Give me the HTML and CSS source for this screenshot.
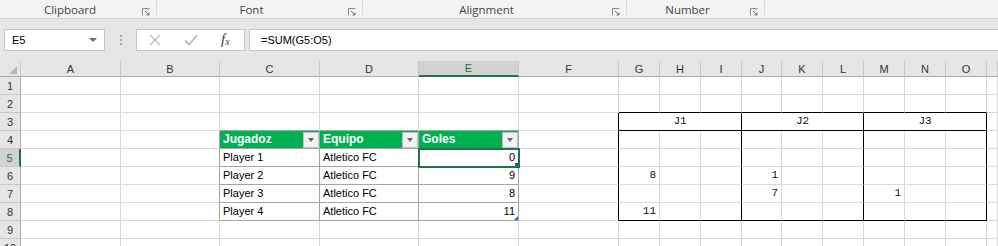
FILE: index.html
```html
<!DOCTYPE html>
<html lang="en">
<head>
    <meta charset="UTF-8">
    <title>Libro1 - Excel</title>
    <link rel="stylesheet" href="styles.css">
</head>
<body>
    <!-- ribbon group labels -->
    <div class="ribbon">
        <div class="group g-clip"><span>Clipboard</span><svg class="launcher" width="8" height="8" viewBox="0 0 8 8"><path d="M0.5 7.5V0.5H7.5" fill="none" stroke="#8a8a8a"/><path d="M3 3L7 7M7 4.5V7H4.5" fill="none" stroke="#6a6a6a"/></svg></div>
        <div class="group g-font"><span>Font</span><svg class="launcher" width="8" height="8" viewBox="0 0 8 8"><path d="M0.5 7.5V0.5H7.5" fill="none" stroke="#8a8a8a"/><path d="M3 3L7 7M7 4.5V7H4.5" fill="none" stroke="#6a6a6a"/></svg></div>
        <div class="group g-align"><span>Alignment</span><svg class="launcher" width="8" height="8" viewBox="0 0 8 8"><path d="M0.5 7.5V0.5H7.5" fill="none" stroke="#8a8a8a"/><path d="M3 3L7 7M7 4.5V7H4.5" fill="none" stroke="#6a6a6a"/></svg></div>
        <div class="group g-num"><span>Number</span><svg class="launcher" width="8" height="8" viewBox="0 0 8 8"><path d="M0.5 7.5V0.5H7.5" fill="none" stroke="#8a8a8a"/><path d="M3 3L7 7M7 4.5V7H4.5" fill="none" stroke="#6a6a6a"/></svg></div>
    </div>

    <!-- name box + formula bar -->
    <div class="formula-row">
        <div class="name-box">
            <span>E5</span>
            <span class="caret"></span>
        </div>
        <div class="grip"><i></i><i></i><i></i></div>
        <div class="fx-box">
            <svg width="12" height="12" viewBox="0 0 12 12"><path d="M1 1L11 11M11 1L1 11" stroke="#b8b8b8" stroke-width="1.3"/></svg>
            <svg width="14" height="12" viewBox="0 0 14 12"><path d="M1 6.5L5 10.5L13 1.5" fill="none" stroke="#b8b8b8" stroke-width="1.8"/></svg>
            <span class="fx"><i>f</i><sub>x</sub></span>
        </div>
        <div class="formula-input">=SUM(G5:O5)</div>
    </div>

    <!-- worksheet grid -->
    <table class="sheet">
        <colgroup>
            <col style="width:21px"><col style="width:100px"><col style="width:99px"><col style="width:100px">
            <col style="width:99px"><col style="width:100px"><col style="width:100px"><col style="width:41px">
            <col style="width:41px"><col style="width:41px"><col style="width:40px"><col style="width:41px">
            <col style="width:41px"><col style="width:41px"><col style="width:41px"><col style="width:41px">
            <col>
        </colgroup>
        <tr class="col-heads">
            <th class="corner"><span></span></th>
            <th>A</th><th>B</th><th>C</th><th>D</th><th class="sel">E</th><th>F</th>
            <th>G</th><th>H</th><th>I</th><th>J</th><th>K</th><th>L</th><th>M</th><th>N</th><th>O</th><th></th>
        </tr>
        <tr>
            <th class="rh">1</th>
            <td></td><td></td><td></td><td></td><td></td><td></td>
            <td></td><td></td><td></td><td></td><td></td><td></td><td></td><td></td><td></td><td></td>
        </tr>
        <tr>
            <th class="rh">2</th>
            <td></td><td></td><td></td><td></td><td></td><td></td>
            <td class="kb"></td><td class="kb"></td><td class="kb"></td><td class="kb"></td><td class="kb"></td><td class="kb"></td><td class="kb"></td><td class="kb"></td><td class="kb"></td><td></td>
        </tr>
        <tr>
            <th class="rh">3</th>
            <td></td><td></td><td class="tb"></td><td class="tb"></td><td class="tb"></td><td class="k"></td>
            <td class="mono c k kb" colspan="3">J1</td>
            <td class="mono c k kb" colspan="3">J2</td>
            <td class="mono c k kb" colspan="3">J3</td><td></td>
        </tr>
        <tr>
            <th class="rh">4</th>
            <td></td><td class="t"></td>
            <td class="head t tb"><div class="head-cell">Jugadoz<span class="filter"></span></div></td>
            <td class="head t tb"><div class="head-cell">Equipo<span class="filter"></span></div></td>
            <td class="head t tb"><div class="head-cell">Goles<span class="filter"></span></div></td>
            <td class="k"></td>
            <td></td><td></td><td class="k"></td><td></td><td></td><td class="k"></td><td></td><td></td><td class="k"></td><td></td>
        </tr>
        <tr>
            <th class="rh sel">5</th>
            <td></td><td class="t"></td>
            <td class="t tb">Player 1</td><td class="t tb">Atletico FC</td><td class="t tb r active">0</td>
            <td class="k"></td>
            <td></td><td></td><td class="k"></td><td></td><td></td><td class="k"></td><td></td><td></td><td class="k"></td><td></td>
        </tr>
        <tr>
            <th class="rh">6</th>
            <td></td><td class="t"></td>
            <td class="t tb">Player 2</td><td class="t tb">Atletico FC</td><td class="t tb r">9</td>
            <td class="k"></td>
            <td class="mono r">8</td><td></td><td class="k"></td><td class="mono r">1</td><td></td><td class="k"></td><td></td><td></td><td class="k"></td><td></td>
        </tr>
        <tr>
            <th class="rh">7</th>
            <td></td><td class="t"></td>
            <td class="t tb">Player 3</td><td class="t tb">Atletico FC</td><td class="t tb r">8</td>
            <td class="k"></td>
            <td></td><td></td><td class="k"></td><td class="mono r">7</td><td></td><td class="k"></td><td class="mono r">1</td><td></td><td class="k"></td><td></td>
        </tr>
        <tr>
            <th class="rh">8</th>
            <td></td><td class="t"></td>
            <td class="t tb">Player 4</td><td class="t tb">Atletico FC</td><td class="t tb r resize">11</td>
            <td class="k"></td>
            <td class="mono r kb">11</td><td class="kb"></td><td class="k kb"></td><td class="kb"></td><td class="kb"></td><td class="k kb"></td><td class="kb"></td><td class="kb"></td><td class="k kb"></td><td></td>
        </tr>
        <tr>
            <th class="rh">9</th>
            <td></td><td></td><td></td><td></td><td></td><td></td>
            <td></td><td></td><td></td><td></td><td></td><td></td><td></td><td></td><td></td><td></td>
        </tr>
        <tr>
            <th class="rh">10</th>
            <td></td><td></td><td></td><td></td><td></td><td></td>
            <td></td><td></td><td></td><td></td><td></td><td></td><td></td><td></td><td></td><td></td>
        </tr>
    </table>
</body>
</html>
```

FILE: styles.css
```css
body {
    margin: 0;
    width: 998px;
    height: 246px;
    overflow: hidden;
    background-color: #e6e6e6;
    font-family: "Liberation Sans", Arial, sans-serif;
    color: #000;
}

/* ribbon */
.ribbon {
    display: flex;
    height: 18px;
    background-color: #f3f3f3;
    border-bottom: 1px solid #d4d4d4;
    font-family: "Open Sans", "Noto Sans", sans-serif;
    font-size: 11.5px;
    color: #444;
}
.group {
    display: flex;
    align-items: flex-start;
    justify-content: center;
    position: relative;
    height: 15px;
    border-right: 1px solid #dadada;
    box-sizing: border-box;
    padding-right: 16px;
}
.group span {
    line-height: 16px;
    margin-top: 2px;
}
.launcher {
    position: absolute;
    right: 6px;
    top: 8px;
}
.g-clip { width: 157px; }
.g-font { width: 206px; }
.g-align { width: 264px; }
.g-num { width: 138px; }

/* formula bar */
.formula-row {
    display: flex;
    align-items: center;
    height: 42px;
    padding: 0 0 0 4px;
}
.name-box {
    display: flex;
    align-items: center;
    justify-content: space-between;
    width: 101px;
    height: 22px;
    box-sizing: border-box;
    padding: 0 7px 0 7px;
    background-color: #fff;
    border: 1px solid #c6c6c6;
    font-size: 11px;
}
.caret {
    border-left: 4px solid transparent;
    border-right: 4px solid transparent;
    border-top: 4px solid #6f6f6f;
}
.grip {
    display: flex;
    flex-direction: column;
    gap: 2px;
    width: 31px;
    align-items: center;
}
.grip i {
    display: block;
    width: 2px;
    height: 2px;
    background-color: #a6a6a6;
}
.fx-box {
    display: flex;
    align-items: center;
    width: 109px;
    height: 22px;
    box-sizing: border-box;
    padding: 0 0 0 12px;
    gap: 23px;
    background-color: #fff;
    border: 1px solid #c6c6c6;
}
.fx {
    font-family: "Liberation Serif", serif;
    font-size: 15px;
    color: #444;
    line-height: 16px;
}
.fx sub {
    font-size: 10px;
    font-style: italic;
    vertical-align: -1px;
}
.formula-input {
    flex: 1;
    height: 22px;
    margin-left: 4px;
    box-sizing: border-box;
    padding-left: 11px;
    line-height: 20px;
    background-color: #fff;
    border: 1px solid #c6c6c6;
    border-right: none;
    font-size: 11px;
}

/* worksheet */
.sheet {
    width: 998px;
    table-layout: fixed;
    border-collapse: separate;
    border-spacing: 0;
    background-color: #fff;
    font-size: 11px;
}
.sheet td {
    height: 17px;
    padding: 0 3px;
    border-right: 1px solid #dadada;
    border-bottom: 1px solid #dadada;
    white-space: nowrap;
    overflow: hidden;
    line-height: 17px;
}
.col-heads th {
    height: 14px;
    padding: 0;
    background-color: #e6e6e6;
    border-right: 1px solid #c8c8c8;
    border-bottom: 1px solid #ababab;
    font-weight: normal;
    font-size: 11px;
    color: #333;
    line-height: 14px;
}
.col-heads th.sel {
    background-color: #d2d2d2;
    color: #217346;
    border-bottom: 2px solid #217346;
}
.corner {
    position: relative;
}
.corner span {
    position: absolute;
    right: 3px;
    bottom: 2px;
    border-left: 8px solid transparent;
    border-bottom: 8px solid #b6b6b6;
}
.rh {
    padding: 0;
    background-color: #e6e6e6;
    border-right: 1px solid #ababab;
    border-bottom: 1px solid #c8c8c8;
    font-weight: normal;
    font-size: 11px;
    color: #333;
    text-align: center;
}
.rh.sel {
    background-color: #d2d2d2;
    color: #217346;
    border-right: 2px solid #217346;
}

/* borders around the two tables */
.sheet td.k { border-right-color: #000; }
.sheet td.kb { border-bottom-color: #000; }
.sheet td.t { border-right-color: #a5a5a5; }
.sheet td.tb { border-bottom-color: #a5a5a5; }

.c { text-align: center; }
.r { text-align: right; }
.mono {
    font-family: "Liberation Mono", "Courier New", monospace;
    font-size: 11px;
    color: #111;
}

.head {
    background-color: #00b050;
    color: #fff;
    font-weight: bold;
    font-size: 12px;
}
.sheet td.head {
    padding: 0 0 0 3px;
}
.head-cell {
    display: flex;
    align-items: center;
    justify-content: space-between;
}
.filter {
    display: flex;
    align-items: center;
    justify-content: center;
    width: 16px;
    height: 16px;
    box-sizing: border-box;
    background-color: #f2f2f2;
    border: 1px solid #c1c1c1;
}
.filter::after {
    content: "";
    border-left: 3px solid transparent;
    border-right: 3px solid transparent;
    border-top: 4px solid #666;
}

.sheet td.active {
    position: relative;
    outline: 2px solid #217346;
    outline-offset: -1px;
}
.sheet td.active::after {
    content: "";
    position: absolute;
    right: -3px;
    bottom: -3px;
    width: 5px;
    height: 5px;
    background-color: #217346;
    border: 1px solid #fff;
}
.sheet td.resize {
    position: relative;
}
.sheet td.resize::after {
    content: "";
    position: absolute;
    right: 0;
    bottom: 0;
    border-left: 4px solid transparent;
    border-bottom: 4px solid #3c5ac8;
}
```
